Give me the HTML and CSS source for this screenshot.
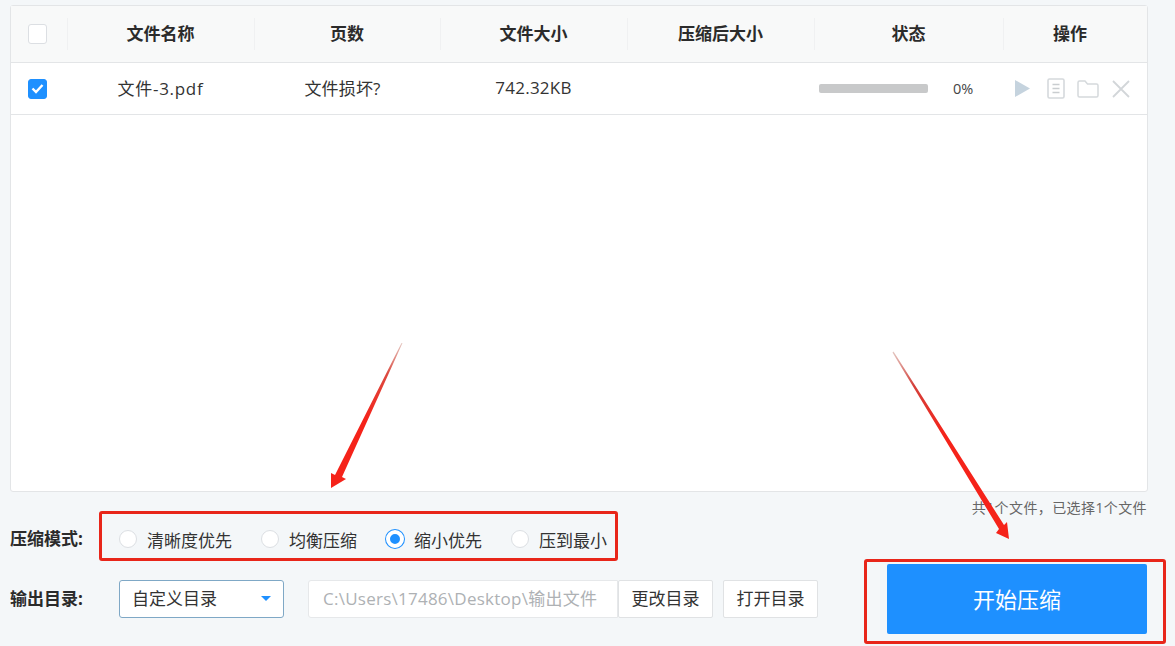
FILE: index.html
```html
<!DOCTYPE html>
<html>

<head>
  <title>压缩</title>
  <link rel="stylesheet" href="styles.css">
</head>

<body>
  <div class="file-table">
    <div class="table-row table-head">
      <div class="cell check-cell"><span class="checkbox"></span></div>
      <div class="cell text-cell">文件名称</div>
      <div class="cell text-cell">页数</div>
      <div class="cell text-cell">文件大小</div>
      <div class="cell text-cell">压缩后大小</div>
      <div class="cell text-cell">状态</div>
      <div class="cell text-cell action-title">操作</div>
    </div>
    <div class="table-row table-item">
      <div class="cell check-cell">
        <span class="checkbox checked">
          <svg width="13" height="11" viewBox="0 0 13 11"><path d="M1.5 5.5 L5 9 L11.5 2" fill="none" stroke="#fff" stroke-width="2.4"/></svg>
        </span>
      </div>
      <div class="cell text-cell name-cell">文件-3.pdf</div>
      <div class="cell text-cell pages-cell">文件损坏?</div>
      <div class="cell text-cell size-cell">742.32KB</div>
      <div class="cell"></div>
      <div class="cell status-cell">
        <div class="progress"></div>
        <span class="percent">0%</span>
      </div>
      <div class="cell actions-cell">
        <svg width="15" height="17" viewBox="0 0 15 17"><path d="M0 0 L15 8.5 L0 17 Z" fill="#c5d3de"/></svg>
        <svg class="doc-icon" width="18" height="21" viewBox="0 0 18 21"><rect x="1" y="1" width="16" height="19" rx="1.5" fill="none" stroke="#d5d9dc" stroke-width="1.6"/><path d="M5.5 6.5 H12.5 M5.5 10.5 H12.5 M5.5 14.5 H12.5" stroke="#c9cdd0" stroke-width="1.6"/></svg>
        <svg class="folder-icon" width="22" height="18" viewBox="0 0 22 18"><path d="M1 15.5 V2.5 Q1 1 2.5 1 H8 L10.5 4 H19.5 Q21 4 21 5.5 V15.5 Q21 17 19.5 17 H2.5 Q1 17 1 15.5 Z" fill="none" stroke="#d5d9dc" stroke-width="1.5"/></svg>
        <svg width="18" height="18" viewBox="0 0 18 18"><path d="M1 1 L17 17 M17 1 L1 17" stroke="#d2d6d9" stroke-width="1.8"/></svg>
      </div>
    </div>
  </div>

  <div class="footer">
    <div class="footer-left">
      <div class="form-row">
        <span class="form-label mode-label">压缩模式:</span>
        <div class="mode-box">
          <label class="radio-item"><span class="radio"></span>清晰度优先</label>
          <label class="radio-item"><span class="radio"></span>均衡压缩</label>
          <label class="radio-item"><span class="radio checked"></span>缩小优先</label>
          <label class="radio-item"><span class="radio"></span>压到最小</label>
        </div>
      </div>
      <div class="form-row output-row">
        <span class="form-label output-label">输出目录:</span>
        <div class="select-box">自定义目录<span class="select-arrow"></span></div>
        <div class="path-input">C:\Users\17486\Desktop\输出文件</div>
        <div class="plain-button">更改目录</div>
        <div class="plain-button open-button">打开目录</div>
      </div>
    </div>
    <div class="footer-right">
      <div class="file-count">共1个文件&#65292;已选择1个文件</div>
      <div class="start-box">
        <div class="start-button">开始压缩</div>
      </div>
    </div>
  </div>

  <!-- 标注箭头 -->
  <svg class="arrows" width="1175" height="646" viewBox="0 0 1175 646">
    <defs>
      <linearGradient id="fade-left" gradientUnits="userSpaceOnUse" x1="402" y1="343" x2="365" y2="420">
        <stop offset="0" stop-color="#e4c8c2"/>
        <stop offset="0.4" stop-color="#dc4a40"/>
        <stop offset="1" stop-color="#f5231a"/>
      </linearGradient>
      <linearGradient id="fade-right" gradientUnits="userSpaceOnUse" x1="893" y1="352" x2="945" y2="436">
        <stop offset="0" stop-color="#e4c8c2"/>
        <stop offset="0.4" stop-color="#d4403a"/>
        <stop offset="1" stop-color="#f5231a"/>
      </linearGradient>
    </defs>
    <polygon points="402.5,343 342,477 346,479 331,488 331,473 335,475 401.5,343" fill="url(#fade-left)"/>
    <polygon points="893.5,351.5 1004,525 1007,522 1009,539 996,533 999,529 892.5,352.5" fill="url(#fade-right)"/>
  </svg>
</body>

</html>
```

FILE: styles.css
```css
html,
body {
  margin: 0;
  height: 646px;
  overflow: hidden;
}

body {
  position: relative;
  box-sizing: border-box;
  padding: 5px 9px 0 10px;
  background-color: #f4f7f9;
  color: #333;
  font-family: "Open Sans", "Noto Sans CJK SC", sans-serif;
  font-size: 17px;
}

.file-table {
  box-sizing: border-box;
  width: 1138px;
  height: 487px;
  background-color: #fff;
  border: 1px solid #e3e5e7;
  border-radius: 3px;
}

.table-row {
  display: grid;
  grid-template-columns: 56px 187px 186px 187px 187px 189px 144px;
  border-bottom: 1px solid #e3e5e7;
}

.table-head {
  height: 56px;
  background-color: #f8f9f9;
  font-weight: 700;
  color: #2b2b2b;
}

.table-item {
  height: 51px;
}

.cell {
  display: flex;
  align-items: center;
  justify-content: center;
  white-space: nowrap;
}

.table-head .cell {
  position: relative;
}

.table-head .cell::before {
  content: "";
  position: absolute;
  left: 0;
  top: 12px;
  bottom: 12px;
  width: 1px;
  background-color: #f0f1f2;
}

.table-head .check-cell::before {
  display: none;
}

.table-head .text-cell {
  padding-bottom: 3px;
}

.table-item .text-cell {
  padding-bottom: 2px;
}

.check-cell {
  padding-right: 3px;
}

.action-title {
  padding-right: 10px;
}

.name-cell {
  letter-spacing: 0.7px;
}

.pages-cell {
  padding-right: 9px;
  letter-spacing: 0.15px;
}

.size-cell {
  letter-spacing: 0.25px;
}

.checkbox {
  box-sizing: border-box;
  display: flex;
  align-items: center;
  justify-content: center;
  width: 19px;
  height: 20px;
  background-color: #fff;
  border: 1px solid #dcdfe3;
  border-radius: 3px;
}

.checkbox.checked {
  background-color: #1e90ff;
  border-color: #1e90ff;
}

.status-cell {
  justify-content: flex-start;
  padding-left: 5px;
}

.progress {
  width: 109px;
  height: 9px;
  margin-right: 25px;
  background-color: #c8c9ca;
  border-radius: 2px;
}

.percent {
  font-size: 14.5px;
  color: #444;
}

.actions-cell {
  justify-content: flex-start;
  gap: 13px;
  padding-left: 12px;
}

.doc-icon {
  margin-left: 4px;
}

.folder-icon {
  margin-left: -1px;
}

.footer {
  display: flex;
}

.footer-left {
  width: 854px;
  padding-top: 19px;
}

.form-row {
  display: flex;
  align-items: center;
}

.form-label {
  font-size: 17px;
  font-weight: 700;
  color: #2b2b2b;
  white-space: nowrap;
}

.mode-label {
  width: 89px;
  padding-top: 3px;
}

.output-label {
  width: 109px;
  padding-bottom: 3px;
}

.mode-box {
  box-sizing: border-box;
  display: flex;
  align-items: center;
  gap: 29px;
  width: 519px;
  height: 50px;
  padding: 6px 0 0 17px;
  border: 3px solid #e8261a;
  border-radius: 3px;
}

.radio-item {
  display: flex;
  align-items: center;
  gap: 10px;
  white-space: nowrap;
}

.radio {
  box-sizing: border-box;
  display: block;
  width: 18px;
  height: 18px;
  background-color: #fff;
  border: 1px solid #dcdfe3;
  border-radius: 50%;
}

.radio.checked {
  border: 4px solid #fff;
  background-color: #1e90ff;
  box-shadow: 0 0 0 1px #1e90ff;
}

.output-row {
  margin-top: 19px;
}

.select-box {
  box-sizing: border-box;
  position: relative;
  width: 165px;
  height: 38px;
  padding-left: 12px;
  line-height: 36px;
  background-color: #fff;
  border: 1px solid #7fa8c6;
  border-radius: 3px;
}

.select-arrow {
  position: absolute;
  right: 12px;
  top: 15px;
  border-left: 5px solid transparent;
  border-right: 5px solid transparent;
  border-top: 5px solid #1e90ff;
}

.path-input {
  box-sizing: border-box;
  width: 310px;
  height: 38px;
  margin-left: 24px;
  padding-left: 14px;
  line-height: 36px;
  white-space: nowrap;
  overflow: hidden;
  letter-spacing: 0.25px;
  color: #aeb1b4;
  background-color: #fff;
  border: 1px solid #e6e8ea;
  border-radius: 3px 0 0 3px;
}

.plain-button {
  box-sizing: border-box;
  width: 95px;
  height: 38px;
  line-height: 36px;
  text-align: center;
  background-color: #fff;
  border: 1px solid #e0e2e4;
  border-radius: 2px;
}

.open-button {
  margin-left: 10px;
}

.footer-right {
  width: 302px;
  padding-top: 7px;
}

.file-count {
  height: 17px;
  line-height: 17px;
  padding-right: 19px;
  text-align: right;
  font-size: 14px;
  letter-spacing: 0.4px;
  color: #666;
  white-space: nowrap;
}

.start-box {
  box-sizing: border-box;
  height: 85px;
  margin-top: 43px;
  padding: 2px 16px 7px 20px;
  border: 3px solid #e8261a;
  border-radius: 3px;
}

.start-button {
  height: 70px;
  line-height: 70px;
  text-align: center;
  font-size: 22px;
  color: #fff;
  background-color: #1e90ff;
  border-radius: 2px;
}

.arrows {
  position: absolute;
  left: 0;
  top: 0;
  pointer-events: none;
}
```
